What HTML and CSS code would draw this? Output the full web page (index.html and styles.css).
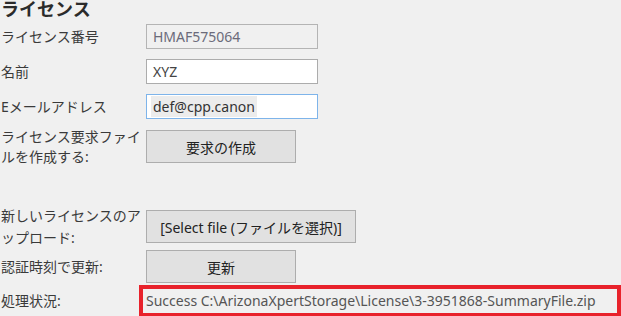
FILE: index.html
```html
<!DOCTYPE html>
<html lang="ja">
<head>
    <meta charset="UTF-8">
    <title>ライセンス</title>
    <link rel="stylesheet" href="styles.css">
</head>
<body>
    <div class="panel">
        <h2 class="title">ライセンス</h2>
        <!-- ライセンス情報 -->
        <div class="row row-field">
            <label class="label">ライセンス番号</label>
            <div class="field field-disabled">HMAF575064</div>
        </div>
        <div class="row row-field">
            <label class="label">名前</label>
            <div class="field">XYZ</div>
        </div>
        <div class="row row-field">
            <label class="label">Eメールアドレス</label>
            <div class="field field-focus"><span class="selected">def@cpp.canon</span></div>
        </div>
        <!-- 要求ファイル -->
        <div class="row row-button row-request">
            <label class="label">ライセンス要求ファイ<br>ルを作成する:</label>
            <button class="btn">要求の作成</button>
        </div>
        <div class="row row-button row-upload">
            <label class="label label-wide">新しいライセンスのア<br>ップロード:</label>
            <button class="btn btn-wide">[Select file (ファイルを選択)]</button>
        </div>
        <div class="row row-button row-update">
            <label class="label">認証時刻で更新:</label>
            <button class="btn">更新</button>
        </div>
        <!-- 処理状況 -->
        <div class="row row-status">
            <label class="label">処理状況:</label>
            <div class="status">Success C:\ArizonaXpertStorage\License\3-3951868-SummaryFile.zip</div>
        </div>
    </div>
</body>
</html>
```

FILE: styles.css
```css
body {
    margin: 0;
    background: #f0f0f0;
    font-family: "Noto Sans", "Noto Sans CJK JP", sans-serif;
    font-size: 14px;
    color: #333;
    overflow: hidden;
}
.panel {
    width: 621px;
    height: 316px;
}
.title {
    margin: 0;
    height: 22px;
    font-size: 18px;
    font-weight: bold;
    line-height: 19px;
    color: #2b2b2b;
    padding-left: 1px;
}
.row {
    display: flex;
    align-items: center;
}
.label {
    width: 146px;
    flex-shrink: 0;
    line-height: 20px;
    padding-left: 1px;
    box-sizing: border-box;
    color: #3a3a3a;
}
.label-wide {
    line-height: 22px;
}
.row-field {
    height: 25px;
    margin-top: 10px;
}
.title + .row-field {
    margin-top: 2px;
}
.field {
    width: 172px;
    height: 25px;
    box-sizing: border-box;
    border: 1px solid #acacac;
    background: #fff;
    padding-left: 6px;
    line-height: 23px;
    color: #444;
}
.field-disabled {
    background: #f0f0f0;
    border-color: #b4b4b4;
    color: #6b6b7a;
}
.field-focus {
    border-color: #7eb4ea;
    padding-left: 4px;
}
.selected {
    background: #ececec;
    padding: 1px 2px;
    color: #333;
}
.row-button {
    height: 33px;
}
.row-request {
    margin-top: 11px;
}
.row-upload {
    margin-top: 47px;
}
.row-update {
    margin-top: 7px;
}
.btn {
    width: 150px;
    height: 33px;
    box-sizing: border-box;
    border: 1px solid #adadad;
    background: #e1e1e1;
    font-family: inherit;
    font-size: 14px;
    color: #222;
    padding: 0;
}
.btn-wide {
    width: 210px;
}
.row-status {
    height: 32px;
    margin-top: 2px;
}
.row-status .label {
    width: 139px;
}
.status {
    width: 482px;
    height: 32px;
    box-sizing: border-box;
    border: 4px solid #e8222b;
    padding-left: 3px;
    line-height: 24px;
    color: #555;
    white-space: nowrap;
    overflow: hidden;
}
```
